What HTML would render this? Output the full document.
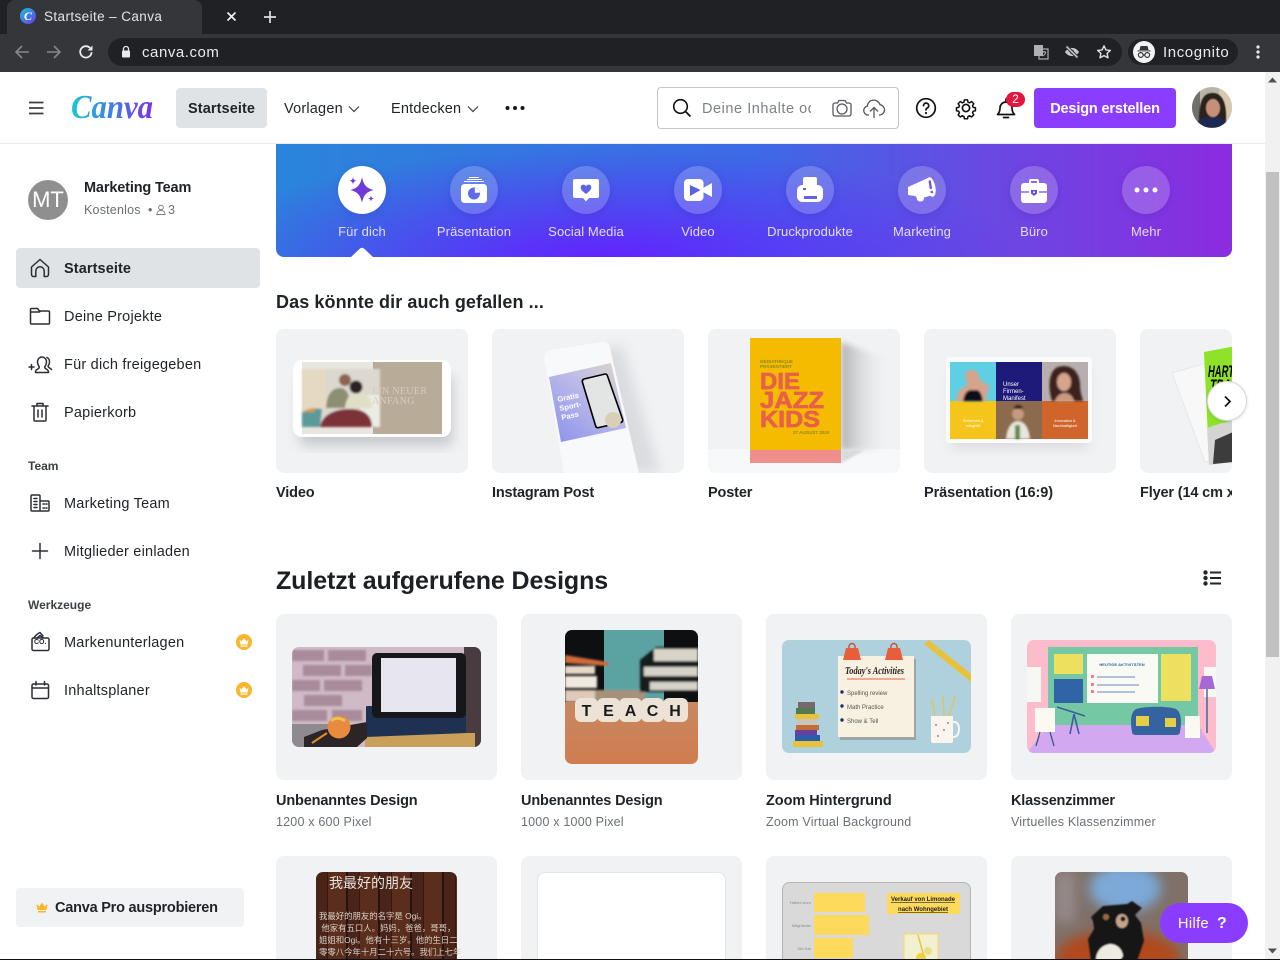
<!DOCTYPE html>
<html lang="de"><head><meta charset="utf-8"><title>Startseite – Canva</title>
<style>
*{box-sizing:border-box}
html,body{margin:0;padding:0;width:1280px;height:960px;overflow:hidden;background:#fff}
body{position:relative;font-family:"Liberation Sans","Noto Sans CJK SC",sans-serif;color:#1f2328;font-size:14.5px}
.a{position:absolute}
.t{position:absolute;white-space:nowrap;line-height:20px;margin-top:1px}
.b{font-weight:700;letter-spacing:-.15px}
.s{color:#6b6f76;font-size:12.5px;letter-spacing:.2px}
.n{letter-spacing:.22px}
.c{background:#f1f2f4;border-radius:8px;position:absolute;overflow:hidden}
svg{position:absolute;display:block;overflow:visible}
.ci{position:absolute;width:48px;height:48px;border-radius:50%;top:166px;background:rgba(255,255,255,.2);box-shadow:0 2px 8px rgba(40,20,120,.12)}
.bl{position:absolute;top:222px;width:112px;text-align:center;font-size:13px;letter-spacing:.1px;line-height:20px;color:#e4dcff;white-space:nowrap}
.ns{fill:none;stroke:#2b2f35;stroke-width:1.5;stroke-linecap:round;stroke-linejoin:round}
.ws{fill:none;stroke:#111;stroke-width:1.7;stroke-linecap:round;stroke-linejoin:round}
</style></head><body>

<!-- browser chrome -->
<div class="a" style="left:0;top:0;width:1280px;height:34px;background:#202124"></div>
<div class="a" style="left:7px;top:0;width:195px;height:34px;background:#35363a;border-radius:8px 8px 0 0"></div>
<div class="a" style="left:0;top:34px;width:1280px;height:38px;background:#35363a"></div>
<div class="a" style="left:20px;top:8px;width:16px;height:16px;border-radius:50%;background:linear-gradient(135deg,#19c3d6,#6a36f0)"></div>
<div class="t" style="left:20px;top:5px;width:16px;text-align:center;color:#fff;font:italic 700 12px/20px 'Liberation Serif',serif">C</div>
<div class="t" style="left:44px;top:6px;color:#e3e4e6;font-size:13.5px;letter-spacing:.4px">Startseite – Canva</div>
<svg style="left:226px;top:11px" width="11" height="11" viewBox="0 0 11 11"><path d="M1.5 1.5l8 8M9.5 1.5l-8 8" stroke="#f1f1f2" stroke-width="1.7"/></svg>
<svg style="left:263px;top:10px" width="14" height="14" viewBox="0 0 14 14"><path d="M7 1v12M1 7h12" stroke="#dfe0e2" stroke-width="1.7"/></svg>
<svg style="left:14px;top:44px" width="16" height="16" viewBox="0 0 16 16"><path d="M15 8H2M8 2L2 8l6 6" fill="none" stroke="#85878b" stroke-width="1.6"/></svg>
<svg style="left:46px;top:44px" width="16" height="16" viewBox="0 0 16 16"><path d="M1 8h13M8 2l6 6-6 6" fill="none" stroke="#85878b" stroke-width="1.6"/></svg>
<svg style="left:78px;top:44px" width="16" height="16" viewBox="0 0 16 16"><path d="M13.6 8.2a5.7 5.7 0 1 1-1.6-4.3" fill="none" stroke="#e8eaed" stroke-width="1.8"/><path d="M14.5 1.5v5h-5z" fill="#e8eaed"/></svg>
<div class="a" style="left:108px;top:38px;width:1014px;height:28px;background:#202124;border-radius:14px"></div>
<svg style="left:121px;top:45px" width="10" height="14" viewBox="0 0 10 14"><path d="M2.5 5.5V4a2.5 2.5 0 0 1 5 0v1.5" fill="none" stroke="#e8eaed" stroke-width="1.3"/><rect x="1" y="5.5" width="8" height="7" rx="1" fill="#e8eaed"/></svg>
<div class="t" style="left:142px;top:42px;color:#e8eaed;font-size:15px;letter-spacing:.55px">canva.com</div>
<svg style="left:1033px;top:44px" width="16" height="16" viewBox="0 0 16 16"><rect x="1" y="1" width="9" height="11" fill="#aeb0b3"/><rect x="6" y="5" width="9" height="10" fill="none" stroke="#aeb0b3" stroke-width="1.2"/><path d="M9 8h4M11 7v1M9.5 12c2-1 3-2.500 3.300-4" stroke="#aeb0b3" fill="none"/></svg>
<svg style="left:1064px;top:44px" width="16" height="16" viewBox="0 0 16 16"><path d="M1 8c3.500-5.500 10.500-5.500 14 0-3.500 5.500-10.500 5.500-14 0z" fill="#c7c8ca"/><circle cx="8" cy="8" r="2.200" fill="#35363a"/><path d="M2.500 2.500l11 11" stroke="#35363a" stroke-width="3.400"/><path d="M2.500 2.500l11 11" stroke="#c7c8ca" stroke-width="1.500"/></svg>
<svg style="left:1096px;top:44px" width="16" height="16" viewBox="0 0 16 16"><path d="M8 1.800l1.900 4.100 4.500.5-3.300 3 .9 4.400L8 11.600l-4 2.200.9-4.400-3.300-3 4.500-.5z" fill="none" stroke="#dfe0e2" stroke-width="1.400" stroke-linejoin="round"/></svg>
<div class="a" style="left:1128px;top:39px;width:110px;height:26px;background:#202124;border-radius:13px"></div>
<div class="a" style="left:1133px;top:41px;width:22px;height:22px;border-radius:50%;background:#f1f3f4"></div>
<svg style="left:1136px;top:44px" width="16" height="16" viewBox="0 0 16 16"><path d="M4.500 2h7l1 4h-9z M1.500 6.400h13v1h-13z" fill="#35363a"/><circle cx="4.800" cy="11" r="2.400" fill="none" stroke="#35363a" stroke-width="1.200"/><circle cx="11.200" cy="11" r="2.400" fill="none" stroke="#35363a" stroke-width="1.200"/><path d="M7 11h2" stroke="#35363a" stroke-width="1.200"/></svg>
<div class="t" style="left:1163px;top:42px;color:#e8eaed;font-size:15px;letter-spacing:.6px">Incognito</div>
<svg style="left:1255px;top:44px" width="6" height="16" viewBox="0 0 6 16"><circle cx="3" cy="3" r="1.600" fill="#e8eaed"/><circle cx="3" cy="8" r="1.600" fill="#e8eaed"/><circle cx="3" cy="13" r="1.600" fill="#e8eaed"/></svg>

<!-- header -->
<div class="a" style="left:0;top:72px;width:1265px;height:72px;background:#fff;border-bottom:1px solid #e8e9eb"></div>
<svg style="left:29px;top:101px" width="15" height="14" viewBox="0 0 15 14"><path d="M0 1.500h14.500M0 7h14.500M0 12.500h14.500" stroke="#3c3f44" stroke-width="1.800"/></svg>
<svg style="left:70px;top:88px" width="86" height="38" viewBox="0 0 86 38"><defs><linearGradient id="lg" x1="0" x2="1" y1="0" y2="0"><stop offset="0" stop-color="#1bc6d4"/><stop offset=".5" stop-color="#3f7fe6"/><stop offset="1" stop-color="#7b2fe8"/></linearGradient></defs><text x="1" y="30" font-family="Liberation Serif" font-style="italic" font-weight="700" font-size="34" fill="url(#lg)" textLength="82" lengthAdjust="spacingAndGlyphs">Canva</text></svg>
<div class="a" style="left:176px;top:88px;width:91px;height:40px;background:#e0e3e6;border-radius:4px"></div>
<div class="t b" style="left:188px;top:98px;letter-spacing:.1px">Startseite</div>
<div class="t" style="left:284px;top:98px;letter-spacing:.2px">Vorlagen</div>
<svg style="left:348px;top:105px" width="12" height="8" viewBox="0 0 12 8"><path d="M1 1.500l5 5 5-5" fill="none" stroke="#3c3f44" stroke-width="1.200"/></svg>
<div class="t" style="left:391px;top:98px;letter-spacing:.2px">Entdecken</div>
<svg style="left:467px;top:105px" width="12" height="8" viewBox="0 0 12 8"><path d="M1 1.500l5 5 5-5" fill="none" stroke="#3c3f44" stroke-width="1.200"/></svg>
<svg style="left:505px;top:105px" width="20" height="6" viewBox="0 0 20 6"><circle cx="2.500" cy="3" r="2" fill="#16181b"/><circle cx="10" cy="3" r="2" fill="#16181b"/><circle cx="17.500" cy="3" r="2" fill="#16181b"/></svg>
<div class="a" style="left:657px;top:87px;width:242px;height:42px;border:1px solid #c3c5c9;border-radius:4px;background:#fff"></div>
<svg style="left:671px;top:97px" width="22" height="22" viewBox="0 0 22 22"><circle cx="9.500" cy="9.500" r="6.800" fill="none" stroke="#111" stroke-width="1.600"/><path d="M14.500 14.500l5 5" stroke="#111" stroke-width="1.800"/></svg>
<div class="a" style="left:702px;top:99px;width:109px;height:20px;overflow:hidden"><div class="t" style="left:0;top:0;margin-top:0;color:#7d8085;letter-spacing:.55px">Deine Inhalte oder Canvas</div></div>
<svg style="left:830px;top:96px" width="24" height="24" viewBox="0 0 24 24"><path d="M3 9a2 2 0 0 1 2-2h2.500l1.500-2.500h6L16.500 7H19a2 2 0 0 1 2 2v9a2 2 0 0 1-2 2H5a2 2 0 0 1-2-2z" fill="none" stroke="#55585d" stroke-width="1.300"/><circle cx="12" cy="13" r="5" fill="none" stroke="#55585d" stroke-width="1.300"/></svg>
<svg style="left:862px;top:96px" width="24" height="24" viewBox="0 0 24 24"><path d="M7 19H6a4.500 4.500 0 0 1-.7-8.900A6.500 6.500 0 0 1 18 8.700a5.200 5.200 0 0 1 0 10.300h-1" fill="none" stroke="#55585d" stroke-width="1.300"/><path d="M12 22v-10M8 15.500l4-4 4 4" fill="none" stroke="#55585d" stroke-width="1.300"/></svg>
<svg style="left:914px;top:96px" width="24" height="24" viewBox="0 0 24 24"><circle cx="12" cy="12" r="9.300" class="ws"/><path d="M9.500 9.700a2.600 2.600 0 1 1 3.800 2.300c-.9.500-1.300 1-1.300 2" class="ws"/><circle cx="12" cy="17" r="1.100" fill="#111"/></svg>
<svg style="left:954px;top:96px" width="24" height="24" viewBox="0 0 24 24"><path d="M10.200 2.800h3.600l.5 2.600 1.900.8 2.200-1.500 2.500 2.500-1.500 2.200.8 1.900 2.600.5v3.400l-2.600.5-.8 1.900 1.500 2.200-2.500 2.500-2.200-1.500-1.900.8-.5 2.600h-3.600l-.5-2.600-1.900-.8-2.200 1.500-2.500-2.500 1.500-2.200-.8-1.900-2.600-.5v-3.400l2.600-.5.8-1.900-1.500-2.200 2.500-2.500 2.200 1.500 1.900-.8z" class="ws" transform="translate(1.400 1.400) scale(.88)"/><circle cx="12" cy="12" r="3.600" class="ws"/></svg>
<svg style="left:994px;top:96px" width="24" height="24" viewBox="0 0 24 24"><path d="M3.500 18.500c1.500-1.500 2.500-3 2.500-6.500a6 6 0 0 1 12 0c0 3.500 1 5 2.500 6.500z" class="ws"/><path d="M9.500 21.500h5M12 3v2" class="ws"/></svg>
<div class="a" style="left:1006px;top:92px;width:19px;height:15px;border-radius:8px;background:#e3163f;color:#fff;font-size:12px;line-height:15px;text-align:center">2</div>
<div class="a" style="left:1034px;top:88px;width:142px;height:40px;background:#8b3dff;border-radius:4px"></div>
<div class="t b" style="left:1034px;top:98px;width:142px;text-align:center;color:#fff">Design erstellen</div>
<svg style="left:1192px;top:87px" width="40" height="41" viewBox="0 0 40 41"><defs><clipPath id="av"><ellipse cx="20" cy="20.500" rx="20" ry="20.500"/></clipPath><filter id="b1"><feGaussianBlur stdDeviation=".6"/></filter></defs><g clip-path="url(#av)"><rect width="40" height="41" fill="#b9b4a6"/><rect x="27" width="13" height="41" fill="#d8c9ae"/><rect x="0" width="8" height="41" fill="#70706c"/><g filter="url(#b1)"><path d="M7 34C7 10 13 6 21 6s14 8 13 28z" fill="#2c211c"/><ellipse cx="21" cy="21" rx="7" ry="9" fill="#c69078"/><path d="M3 41c1-9 9-11 17-11s16 3 17 11z" fill="#1b2a52"/></g></g></svg>

<!-- sidebar -->
<div class="a" style="left:28px;top:180px;width:40px;height:40px;border-radius:50%;background:#8f8f8f;color:#fff;font-size:22px;line-height:40px;text-align:center">MT</div>
<div class="t b" style="left:84px;top:177px">Marketing Team</div>
<div class="t s" style="left:84px;top:199px">Kostenlos&nbsp; •</div>
<svg style="left:156px;top:204px" width="10" height="12" viewBox="0 0 12 14"><circle cx="6" cy="4" r="2.800" fill="none" stroke="#6b6f76"/><path d="M1 12.500c0-3 2-5 5-5s5 2 5 5z" fill="none" stroke="#6b6f76"/></svg>
<div class="t s" style="left:168px;top:199px">3</div>
<div class="a" style="left:16px;top:248px;width:244px;height:40px;background:#e0e3e6;border-radius:4px"></div>
<svg style="left:28px;top:256px" width="24" height="24" viewBox="0 0 24 24"><path d="M3.500 11L12 3.500l8.500 7.500v7.500a2 2 0 0 1-2 2h-2.300v-5.500a4.200 4.200 0 0 0-8.400 0v5.500H5.500a2 2 0 0 1-2-2z" class="ns"/></svg>
<div class="t b" style="left:64px;top:258px;letter-spacing:.1px">Startseite</div>
<svg style="left:28px;top:304px" width="24" height="24" viewBox="0 0 24 24"><path d="M2.500 7V5.500a1 1 0 0 1 1-1h6l2 2.500h9a1 1 0 0 1 1 1v11a1 1 0 0 1-1 1h-17a1 1 0 0 1-1-1z M2.500 8h8.800l1.500-1" class="ns"/></svg>
<div class="t n" style="left:64px;top:306px">Deine Projekte</div>
<svg style="left:28px;top:352px" width="24" height="24" viewBox="0 0 24 24"><path d="M7.500 20.500c-.2-3 2-3 3.300-4.200.8-.8.600-1.500-.1-2.500-1-1.500-1.400-3-1.100-5C10 6.500 12 5 14 5s4 1.500 4.400 3.800c.3 2-.1 3.500-1.100 5-.7 1-.9 1.700-.1 2.500 1.300 1.200 3.500 1.200 3.300 4.200z" class="ns"/><path d="M19 5.500c2 1 2.700 3 2.500 5-.2 1.500-1 3-1.500 3.800.2 1.200 2.200 1.700 3.500 3.200M1 15h5M3.500 12.500v5" class="ns" stroke-width="1.300"/></svg>
<div class="t n" style="left:64px;top:354px">Für dich freigegeben</div>
<svg style="left:28px;top:400px" width="24" height="24" viewBox="0 0 24 24"><path d="M4 6h16M9 6V3.500h6V6M6 6v14a1 1 0 0 0 1 1h10a1 1 0 0 0 1-1V6M10 10v7M14 10v7" class="ns"/></svg>
<div class="t n" style="left:64px;top:402px">Papierkorb</div>
<div class="t b" style="left:28px;top:455px;font-size:12px;color:#3c3f44;letter-spacing:0">Team</div>
<svg style="left:28px;top:491px" width="24" height="24" viewBox="0 0 24 24"><path d="M3 5a1 1 0 0 1 1-1h7a1 1 0 0 1 1 1v15H4a1 1 0 0 1-1-1zM12 10h8a1 1 0 0 1 1 1v8a1 1 0 0 1-1 1h-8M6 7.500h3M6 10.500h3M6 13.500h3M6 16.500h3M15 13h1.500M18 13h1M15 17h1.500M18 17h1" class="ns"/></svg>
<div class="t n" style="left:64px;top:493px">Marketing Team</div>
<svg style="left:28px;top:539px" width="24" height="24" viewBox="0 0 24 24"><path d="M12 4.500v15M4.500 12h15" class="ns"/></svg>
<div class="t n" style="left:64px;top:541px">Mitglieder einladen</div>
<div class="t b" style="left:28px;top:594px;font-size:12px;color:#3c3f44;letter-spacing:0">Werkzeuge</div>
<svg style="left:28px;top:630px" width="24" height="24" viewBox="0 0 24 24"><rect x="4" y="8" width="17" height="12.500" rx="1.500" class="ns"/><path d="M6 8c1-2 3-4 6-5.500l3 3.500M9 8l3-2.500L15 8" class="ns"/></svg>
<div class="t" style="left:34px;top:636px;width:12px;font-size:7px;font-weight:700;line-height:12px;text-align:center">CO.</div>
<div class="t n" style="left:64px;top:632px">Markenunterlagen</div>
<svg style="left:28px;top:678px" width="24" height="24" viewBox="0 0 24 24"><rect x="4" y="6" width="16.500" height="14.500" rx="1.500" class="ns"/><path d="M4 10h16.500M8 3.500V7M16.500 3.500V7" class="ns"/></svg>
<div class="t n" style="left:64px;top:680px">Inhaltsplaner</div>
<svg style="left:236px;top:634px" width="16" height="16" viewBox="0 0 16 16"><circle cx="8" cy="8" r="8" fill="#fbb52c"/><path d="M3.500 5.500l2 2L8 4l2.500 3.500 2-2-.8 5H4.300zM4.500 11.500h7v1.200h-7z" fill="#fff"/></svg>
<svg style="left:236px;top:682px" width="16" height="16" viewBox="0 0 16 16"><circle cx="8" cy="8" r="8" fill="#fbb52c"/><path d="M3.500 5.500l2 2L8 4l2.500 3.500 2-2-.8 5H4.300zM4.500 11.500h7v1.200h-7z" fill="#fff"/></svg>
<div class="a" style="left:16px;top:888px;width:228px;height:39px;background:#f1f2f4;border-radius:4px"></div>
<svg style="left:36px;top:902px" width="12" height="11" viewBox="0 0 12 11"><path d="M.5 2l2.800 2.600L6 .5l2.700 4.100L11.500 2l-1 6h-9zM2 9h8v1.500H2z" fill="#fbb52c"/></svg>
<div class="t b" style="left:55px;top:897px;letter-spacing:-.22px">Canva Pro ausprobieren</div>

<!-- banner -->
<div class="a" style="left:276px;top:144px;width:956px;height:113px;border-radius:0 0 8px 8px;background:radial-gradient(ellipse 420px 115px at 330px 118px,rgba(100,32,255,1),rgba(100,32,255,0)),linear-gradient(90deg,#2a85da,#3d6ae6 50%,#6a48e2 75%,#8a2ce0)"></div>
<div class="ci" style="left:338px;background:#fff"></div>
<div class="ci" style="left:450px"></div><div class="ci" style="left:562px"></div><div class="ci" style="left:674px"></div><div class="ci" style="left:786px"></div><div class="ci" style="left:898px"></div><div class="ci" style="left:1010px"></div><div class="ci" style="left:1122px"></div>
<svg style="left:338px;top:166px" width="48" height="48" viewBox="0 0 48 48" fill="#6f3ad8"><path d="M24 11c1.500 8 4.800 11.500 12 13-7.200 1.500-10.500 5-12 13-1.500-8-4.800-11.500-12-13 7.200-1.500 10.500-5 12-13z"/><path d="M15 11c.4 2.500 1.200 3.300 3.500 3.800-2.300.5-3.100 1.300-3.500 3.800-.4-2.500-1.200-3.300-3.500-3.800 2.300-.5 3.100-1.300 3.500-3.800zM33 29.500c.4 2 1 2.600 3 3-2 .4-2.600 1-3 3-.4-2-1-2.600-3-3 2-.4 2.600-1 3-3z"/></svg>
<svg style="left:450px;top:166px" width="48" height="48" viewBox="0 0 48 48" fill="#fff"><rect x="19" y="11" width="10" height="1"/><rect x="17" y="13" width="15" height="1"/><rect x="14" y="15" width="20" height="1"/><rect x="11" y="18" width="26" height="19" rx="3.500"/><circle cx="24" cy="27.500" r="6" fill="#5f6cea"/><path d="M24.800 26.700v-5a5.500 5.500 0 0 1 5 5z" fill="#fff"/></svg>
<svg style="left:574px;top:178px" width="24" height="24" viewBox="0 0 24 24" fill="#fff"><path d="M1 1h22a2 2 0 0 1 2 2v15a2 2 0 0 1-2 2h-8l-3 3.500L9 20H1a2 2 0 0 1-2-2V3a2 2 0 0 1 2-2z"/><path d="M12 16c-3.700-2.800-5.300-4.500-5.300-6.600 0-3.200 3.800-3.700 5.300-1.200 1.500-2.500 5.300-2 5.300 1.200 0 2.100-1.600 3.800-5.300 6.600z" fill="#5e64e8"/></svg>
<svg style="left:686px;top:178px" width="24" height="24" viewBox="0 0 24 24" fill="#fff"><rect x="-2" y="1" width="19.500" height="22" rx="4"/><path d="M17 10l9-5v14l-9-5z"/><path d="M4 7l10.500 5L4 18z" fill="#5a60e6"/></svg>
<svg style="left:798px;top:178px" width="24" height="24" viewBox="0 0 24 24" fill="#fff"><rect x="5" y="-1" width="14" height="9" rx="2"/><rect x="-1" y="7" width="26" height="17" rx="5.500"/><rect x="6" y="18" width="13" height="3" fill="#6561e6"/><rect x="5" y="10" width="3" height="2" fill="#6561e6"/></svg>
<svg style="left:910px;top:178px" width="24" height="24" viewBox="0 0 24 24" fill="#fff"><path d="M-2 9L18 0l5 17-9 2.500c0 2.500-1 4-3.500 4S6.500 22 6.500 19L5 18l-7-1z"/><ellipse cx="21" cy="9" rx="4.300" ry="10" transform="rotate(-12 21 9)"/><path d="M19.800 3.500l1 6.500" stroke="#6a58e4" stroke-width="2.400" stroke-linecap="round"/><circle cx="21.800" cy="14" r="1.300" fill="#6a58e4"/></svg>
<svg style="left:1022px;top:178px" width="24" height="24" viewBox="0 0 24 24" fill="#fff"><path d="M7 6V3a2 2 0 0 1 2-2h6a2 2 0 0 1 2 2v3h-2V3H9v3z"/><rect x="-1" y="5" width="26" height="20" rx="3"/><path d="M-1 14h8M17 14h8" stroke="#6c4ce4" stroke-width="1.200"/><path d="M9 12h6v3.500L12 18l-3-2.500z" fill="#6c4ce4"/><circle cx="12" cy="14.300" r="1" fill="#fff"/></svg>
<svg style="left:1134px;top:186px" width="24" height="8" viewBox="0 0 24 8" fill="#fff"><circle cx="3" cy="4" r="2.500"/><circle cx="12" cy="4" r="2.500"/><circle cx="21" cy="4" r="2.500"/></svg>
<div class="bl" style="left:306px">Für dich</div><div class="bl" style="left:418px">Präsentation</div><div class="bl" style="left:530px">Social Media</div><div class="bl" style="left:642px">Video</div><div class="bl" style="left:754px">Druckprodukte</div><div class="bl" style="left:866px">Marketing</div><div class="bl" style="left:978px">Büro</div><div class="bl" style="left:1090px">Mehr</div>
<svg style="left:350px;top:247px" width="24" height="10" viewBox="0 0 24 10"><path d="M1 10l9-8.500a3 3 0 0 1 4 0l9 8.500z" fill="#fff"/></svg>

<!-- templates -->
<div class="t b" style="left:276px;top:291px;font-size:18px;letter-spacing:.09px">Das könnte dir auch gefallen ...</div>

<div class="c" style="left:276px;top:329px;width:192px;height:144px">
<svg width="192" height="144" viewBox="276 329 192 144"><defs><filter id="sh"><feGaussianBlur stdDeviation="6"/></filter><filter id="b2"><feGaussianBlur stdDeviation="1"/></filter></defs>
<rect x="299" y="376" width="154" height="70" rx="8" fill="#a6a8ae" opacity=".55" filter="url(#sh)"/><rect x="293" y="360" width="158" height="77" rx="9" fill="#fff"/><rect x="302" y="362" width="140" height="72" fill="#e9e6e0"/><rect x="373" y="362" width="69" height="72" fill="#b8ac98"/>
<g filter="url(#b2)"><rect x="302" y="369" width="78" height="58" fill="#dcd8cf"/><rect x="302" y="369" width="24" height="40" fill="#e5d9c4"/><rect x="360" y="395" width="20" height="32" fill="#ecebe6"/><path d="M326 408c1-14 6-20 14-20 9 0 10 12 11 20z" fill="#8e8e72"/><circle cx="345" cy="380" r="6" fill="#8a6550"/><path d="M345 408c1-12 8-18 16-16 8 2 11 10 11 16z" fill="#e0dfc6"/><circle cx="356" cy="387" r="6.500" fill="#2c2320"/><path d="M320 427c2-12 14-18 30-18s22 8 22 18z" fill="#7d3138"/><path d="M302 427v-14c6-4 12-5 20-4l-2 18z" fill="#5b9a9a"/><path d="M302 412c5-3 9-4 14-4l-2 4z" fill="#d69b46"/></g>
<text x="372" y="394" font-family="Liberation Serif" font-size="10" fill="#d4ccbc" letter-spacing=".3">EIN NEUER</text><text x="372" y="404" font-family="Liberation Serif" font-size="10" fill="#d4ccbc" letter-spacing=".3">ANFANG</text></svg></div>

<div class="c" style="left:492px;top:329px;width:192px;height:144px">
<svg width="192" height="144" viewBox="492 329 192 144"><defs><linearGradient id="ig" x1="0" x2=".8" y1="1" y2="0"><stop offset="0" stop-color="#8a90ea"/><stop offset=".6" stop-color="#b9b8ea"/><stop offset="1" stop-color="#d8d2cc"/></linearGradient></defs>
<path d="M560 360L622 345 660 473H580z" fill="#b9bbc1" opacity=".4" filter="url(#sh)"/><path d="M545 362c-2-6 0-10 6-12l50-8c5-1 8 1 9 6l29 125h-75z" fill="#f8f9fa"/>
<path d="M549 377L611 363 626 428 561 442z" fill="url(#ig)"/><path d="M584 379l21-5c1 0 2 0 2.500 2l15 43c.5 2 0 3-1.500 3.500l-22 5c-2 .5-3 0-3.500-2l-13-43c-.5-2 0-3 1.500-3.500z" fill="#e3e5e5" stroke="#000" stroke-width="1.600"/><circle cx="613" cy="420" r="8" fill="#d9cfb6"/>
<text transform="translate(558 402) rotate(-12)" font-size="7.500" font-weight="700" fill="#fff">Gratis</text><text transform="translate(560 411) rotate(-12)" font-size="7.500" font-weight="700" fill="#fff">Sport-</text><text transform="translate(562 420) rotate(-12)" font-size="7.500" font-weight="700" fill="#fff">Pass</text></svg></div>

<div class="c" style="left:708px;top:329px;width:192px;height:144px">
<svg width="192" height="144" viewBox="708 329 192 144"><defs><linearGradient id="ps" x1="0" x2="1"><stop offset="0" stop-color="#b0b2b6"/><stop offset="1" stop-color="#eff0f2" stop-opacity="0"/></linearGradient><filter id="b3"><feGaussianBlur stdDeviation="3"/></filter></defs>
<rect x="708" y="449" width="192" height="24" fill="#f7f8f9"/><path d="M841 342L890 360V450H841z" fill="url(#ps)" filter="url(#b3)"/><path d="M841 450h24l-24 13z" fill="#d9dadd" filter="url(#b2)"/>
<rect x="750" y="338" width="91" height="112" fill="#f5bb00"/><rect x="750" y="450" width="91" height="13" fill="#ef8f8b"/>
<text x="760" y="363" font-size="4.500" font-weight="700" fill="#8e8a20">MÉDIATHÈQUE</text><text x="760" y="368" font-size="4.500" font-weight="700" fill="#8e8a20">PRÄSENTIERT</text>
<g font-family="Liberation Sans" font-weight="700" font-size="23" fill="#e8604a" stroke="#e8604a" stroke-width=".7"><text x="760" y="389" textLength="40" lengthAdjust="spacingAndGlyphs">DIE</text><text x="760" y="408" textLength="64" lengthAdjust="spacingAndGlyphs">JAZZ</text><text x="760" y="427" textLength="60" lengthAdjust="spacingAndGlyphs">KIDS</text></g>
<text x="793" y="434" font-size="4.500" font-weight="700" fill="#8e8a20">27 AUGUST 2020</text></svg></div>

<div class="c" style="left:924px;top:329px;width:192px;height:144px">
<svg width="192" height="144" viewBox="924 329 192 144">
<rect x="952" y="372" width="136" height="76" fill="#b4b6bc" opacity=".4" filter="url(#sh)"/><rect x="946" y="357" width="146" height="86" rx="4" fill="#fbfbfc"/>
<rect x="950" y="362" width="46" height="39" fill="#5fd0e3"/><rect x="996" y="362" width="46" height="39" fill="#1d1a7a"/><rect x="1042" y="362" width="46" height="39" fill="#b8aeb0"/><rect x="950" y="401" width="46" height="38" fill="#f6c51c"/><rect x="996" y="401" width="46" height="38" fill="#8b6a4d"/><rect x="1042" y="401" width="46" height="38" fill="#cf652b"/>
<g filter="url(#b2)"><path d="M956 401c1-9 5-14 12-16l-3-8c0-8 10-10 13-3l4 8 8 4c-3 5-4 10-3 15z" fill="#d6a48c"/><path d="M963 401c1-6 3-10 7-11h7c4 1 5 6 6 11z" fill="#101014"/><path d="M1052 401c-4-12-4-30 6-34 14-4 22 6 22 18 0 7 2 12 3 16z" fill="#3a241a"/><ellipse cx="1064" cy="382" rx="7" ry="9" fill="#d7a58c"/><path d="M1055 401c2-6 6-8 10-8s8 3 9 8z" fill="#c99880"/><circle cx="1018" cy="414" r="6" fill="#c59b7e"/><path d="M1014 409c0-5 8-5 9 0z" fill="#2a1c14"/><path d="M1006 439c1-12 6-18 12-18s11 6 12 18z" fill="#e9e6e0"/><path d="M1015 439v-14h5v14z" fill="#5d8b47"/></g>
<text x="1003" y="386" font-size="6" fill="#fff">Unser</text><text x="1003" y="393" font-size="6" fill="#fff">Firmen-</text><text x="1003" y="400" font-size="6" fill="#fff">Manifest</text>
<text x="973" y="422" font-size="3.800" text-anchor="middle" fill="#fff">Sicherheit &amp;</text><text x="973" y="427" font-size="3.800" text-anchor="middle" fill="#fff">Integrität</text><text x="1065" y="422" font-size="3.800" text-anchor="middle" fill="#fff">Innovation &amp;</text><text x="1065" y="427" font-size="3.800" text-anchor="middle" fill="#fff">Nachhaltigkeit</text></svg></div>

<div class="c" style="left:1140px;top:329px;width:92px;height:144px">
<svg width="92" height="144" viewBox="1140 329 92 144"><path d="M1172 373l70-20v100l-37 9z" fill="#f8f8f9" stroke="#e6e7e9"/><path d="M1204 352l32-6v112l-27 2z" fill="#8fe22a"/><path d="M1207 428c10-4 20-6 26-8v42l-24 3z" fill="#d4d4d4"/><path d="M1215 440l18-8v30l-20 2z" fill="#3c3c3c"/><text x="1208" y="377" font-size="17" font-weight="700" font-style="italic" fill="#000" textLength="26" lengthAdjust="spacingAndGlyphs">HART</text><text x="1210" y="391" font-size="17" font-weight="700" font-style="italic" fill="#000" textLength="24" lengthAdjust="spacingAndGlyphs">TRAI</text></svg></div>

<div class="t b" style="left:276px;top:482px">Video</div>
<div class="t b" style="left:492px;top:482px;letter-spacing:-.2px">Instagram Post</div>
<div class="t b" style="left:708px;top:482px">Poster</div>
<div class="t b" style="left:924px;top:482px;letter-spacing:-.08px">Präsentation (16:9)</div>
<div class="a" style="left:1140px;top:483px;width:92px;height:20px;overflow:hidden"><div class="t b" style="left:0;top:0;margin-top:0">Flyer (14 cm x 21 cm)</div></div>
<div class="a" style="left:1207px;top:381px;width:40px;height:40px;border-radius:50%;background:#fff;border:1px solid #d5d7da;box-shadow:0 1px 3px rgba(0,0,0,.12)"></div>
<svg style="left:1223px;top:395px" width="9" height="13" viewBox="0 0 9 13"><path d="M2 1.500l5 5-5 5" fill="none" stroke="#111" stroke-width="1.700"/></svg>

<div class="t" style="left:276px;top:565px;font-size:25px;font-weight:700;line-height:30px;letter-spacing:-.1px;color:#1c1f23">Zuletzt aufgerufene Designs</div>
<svg style="left:1203px;top:570px" width="18" height="16" viewBox="0 0 18 16"><circle cx="2.500" cy="2.500" r="2.200" fill="#22262b"/><circle cx="2.500" cy="8" r="2.200" fill="#22262b"/><circle cx="2.500" cy="13.500" r="2.200" fill="#22262b"/><path d="M7 2.500h11M7 8h11M7 13.500h11" stroke="#22262b" stroke-width="1.900"/></svg>

<!-- recent row 1 -->
<div class="c" style="left:276px;top:614px;width:221px;height:166px">
<svg width="221" height="166" viewBox="276 614 221 166"><defs><clipPath id="r1"><rect x="292" y="647" width="189" height="100" rx="7"/></clipPath></defs><g clip-path="url(#r1)"><rect x="292" y="647" width="189" height="100" fill="#cfbac6"/><g filter="url(#b2)" fill="#a98b9c"><rect x="292" y="650" width="32" height="11"/><rect x="328" y="650" width="38" height="11"/><rect x="303" y="665" width="38" height="11"/><rect x="345" y="665" width="27" height="11"/><rect x="292" y="680" width="28" height="11"/><rect x="324" y="680" width="38" height="11"/><rect x="304" y="695" width="38" height="11"/><rect x="292" y="710" width="35" height="11"/><rect x="332" y="710" width="30" height="11"/></g><rect x="464" y="647" width="17" height="100" fill="#4a3b41"/><rect x="292" y="724" width="40" height="23" fill="#8f8a8f"/><rect x="366" y="706" width="100" height="36" rx="1" fill="#1f3152"/><rect x="372" y="653" width="94" height="65" rx="5" fill="#16171a"/><rect x="381" y="658" width="75" height="54" fill="#e7e6ee"/><path d="M365 737l102-4 8 0v14H365z" fill="#c9a05a"/><path d="M304 747v-10l18-7 45-8v16l-10 9z" fill="#2c2528"/><path d="M312 743l15-10" stroke="#e28a2a" stroke-width="2"/><circle cx="339" cy="727" r="11.500" fill="#e88b3f"/><path d="M331 721c4-4 10-3 14 0" stroke="#e8c15a" stroke-width="3" fill="none"/></g></svg></div>

<div class="c" style="left:521px;top:614px;width:221px;height:166px">
<svg width="221" height="166" viewBox="521 614 221 166"><defs><clipPath id="r2"><rect x="565" y="630" width="133" height="134" rx="7"/></clipPath><linearGradient id="wd" x1="0" x2="0" y1="0" y2="1"><stop offset="0" stop-color="#c78860"/><stop offset="1" stop-color="#d07c50"/></linearGradient></defs><g clip-path="url(#r2)"><rect x="565" y="630" width="133" height="72" fill="#0d0f10"/><rect x="604" y="630" width="60" height="72" fill="#5ba3a3"/><g filter="url(#b2)"><path d="M565 655l43 7v4l-43-3z" fill="#cf6a3a"/><rect x="565" y="666" width="30" height="8" fill="#e8d8c8"/><rect x="565" y="676" width="32" height="12" fill="#efe9df"/><rect x="565" y="690" width="30" height="12" fill="#dfc9b8"/><rect x="595" y="690" width="50" height="12" fill="#a8917a"/><path d="M640 660l16-13h42v45h-58z" fill="#141c1c"/><rect x="654" y="649" width="44" height="12" fill="#d8d4c8"/><rect x="644" y="667" width="54" height="9" fill="#d5d2c9"/><rect x="650" y="682" width="48" height="8" fill="#d5d2c9"/></g><rect x="565" y="702" width="133" height="62" fill="url(#wd)"/></g>
<g fill="#ece3d6"><rect x="575" y="698" width="23" height="24" rx="6"/><rect x="597" y="698" width="23" height="24" rx="6"/><rect x="619" y="698" width="23" height="24" rx="6"/><rect x="641" y="698" width="23" height="24" rx="6"/><rect x="663" y="698" width="25" height="24" rx="6"/></g><g font-size="16" font-weight="700" fill="#1a1a1a" text-anchor="middle"><text x="586.500" y="716">T</text><text x="608.500" y="716">E</text><text x="630.500" y="716">A</text><text x="652.500" y="716">C</text><text x="675" y="716">H</text></g></svg></div>

<div class="c" style="left:766px;top:614px;width:221px;height:166px">
<svg width="221" height="166" viewBox="766 614 221 166"><defs><clipPath id="r3"><rect x="782" y="640" width="189" height="113" rx="7"/></clipPath></defs><g clip-path="url(#r3)"><rect x="782" y="640" width="189" height="113" fill="#afd1de"/><rect x="840" y="659" width="76" height="81" fill="#9a9a96" opacity=".8"/><rect x="838" y="656" width="76" height="81" fill="#f8f1e2"/><path d="M924 644L929 640 971 674 971 682z" fill="#e8c23a"/></g>
<g fill="#e85e3a"><path d="M846 648h12l3 12h-18z"/><path d="M888 648h12l3 12h-18z"/></g><path d="M849 648c-1-6 7-6 6 0M891 648c-1-6 7-6 6 0" fill="none" stroke="#c8502f" stroke-width="1.400"/>
<text x="845" y="674" font-family="Liberation Serif" font-style="italic" font-weight="700" font-size="10" fill="#28241e" textLength="59" lengthAdjust="spacingAndGlyphs">Today's Activities</text><path d="M847 679h58" stroke="#e85e3a" stroke-width=".9"/>
<g fill="#1f3163"><circle cx="842" cy="692" r="1.700"/><circle cx="842" cy="706" r="1.700"/><circle cx="842" cy="720" r="1.700"/></g><g font-size="6" fill="#55554f"><text x="847" y="695">Spelling review</text><text x="847" y="709">Math Practice</text><text x="847" y="723">Show &amp; Tell</text></g>
<g><rect x="798" y="702" width="17" height="6" fill="#756b6b"/><rect x="796" y="708" width="19" height="6" fill="#567a4f"/><rect x="795" y="714" width="24" height="5" fill="#e8c23a"/><rect x="797" y="719" width="20" height="6" fill="#c9c5bd"/><rect x="796" y="725" width="23" height="5" fill="#c26f35"/><rect x="795" y="730" width="22" height="5" fill="#6b3fa0"/><rect x="795" y="735" width="25" height="6" fill="#2b5ea8"/><rect x="793" y="741" width="30" height="6" fill="#e8c23a"/></g>
<path d="M931 716h22v25a2 2 0 0 1-2 2h-18a2 2 0 0 1-2-2z" fill="#fbf5ef"/><path d="M953 722c8-2 8 16 0 15" fill="none" stroke="#fbf5ef" stroke-width="2"/><path d="M935 716l-3-17M944 716l-1-20M949 716l6-20" stroke="#e2c54a" stroke-width="1.400"/><g fill="#e26a6a"><circle cx="936" cy="725" r="1"/><circle cx="944" cy="730" r="1"/><circle cx="948" cy="723" r="1"/><circle cx="938" cy="736" r="1"/></g></svg></div>

<div class="c" style="left:1011px;top:614px;width:221px;height:166px">
<svg width="221" height="166" viewBox="1011 614 221 166"><defs><clipPath id="r4"><rect x="1027" y="640" width="189" height="113" rx="7"/></clipPath></defs><g clip-path="url(#r4)"><rect x="1027" y="640" width="189" height="113" fill="#fcbccb"/><rect x="1048" y="647" width="150" height="78" fill="#74c9a4"/><path d="M1027 753l21-28h150l18 28z" fill="#d2a9f0"/><rect x="1027" y="667" width="14" height="35" fill="#f7f7f3"/><rect x="1204" y="667" width="12" height="30" fill="#f7f7f3"/></g>
<rect x="1054" y="654" width="29" height="20" fill="#eee05f"/><rect x="1054" y="679" width="29" height="24" fill="#2f65a6"/><rect x="1087" y="654" width="71" height="49" fill="#fafaf4"/><rect x="1161" y="654" width="30" height="47" fill="#eee05f"/><text x="1122" y="666" font-size="4" font-weight="700" text-anchor="middle" fill="#2f65a6">HEUTIGE AKTIVITÄTEN</text><path d="M1097 677h38M1097 685h42M1097 692h38" stroke="#6b86c2" stroke-width="1"/><g fill="#ef7d9b"><rect x="1091" y="675" width="3" height="3"/><rect x="1091" y="683" width="3" height="3"/><rect x="1091" y="690" width="3" height="3"/></g>
<rect x="1035" y="708" width="20" height="24" fill="#fbfaf2"/><path d="M1040 732l-4 14M1050 732l4 14" stroke="#34558f" stroke-width="1.300"/><path d="M1132 732c-2-12-1-20 4-23 10-3 32-3 40 0 5 3 6 11 4 23 0 3-3 3-6 3h-36c-3 0-6 0-6-3z" fill="#34639f"/><rect x="1136" y="716" width="13" height="10" fill="#e3ce48"/><rect x="1165" y="718" width="11" height="9" fill="#e3ce48"/><path d="M1057 707l28 9M1074 714l-4 20M1074 714l5 20" stroke="#3d5ea0" stroke-width="1.600"/><rect x="1185" y="716" width="15" height="22" fill="#fbfaf2"/><path d="M1202 676h10l3 13h-16z" fill="#a668d2"/><path d="M1207 689v44" stroke="#34558f" stroke-width="1.300"/></svg></div>

<div class="t b" style="left:276px;top:790px">Unbenanntes Design</div><div class="t s" style="left:276px;top:811px">1200 x 600 Pixel</div>
<div class="t b" style="left:521px;top:790px">Unbenanntes Design</div><div class="t s" style="left:521px;top:811px">1000 x 1000 Pixel</div>
<div class="t b" style="left:766px;top:790px;letter-spacing:-.05px">Zoom Hintergrund</div><div class="t s" style="left:766px;top:811px">Zoom Virtual Background</div>
<div class="t b" style="left:1011px;top:790px;letter-spacing:-.2px">Klassenzimmer</div><div class="t s" style="left:1011px;top:811px">Virtuelles Klassenzimmer</div>

<!-- recent row 2 -->
<div class="c" style="left:276px;top:856px;width:221px;height:120px">
<div class="a" style="left:40px;top:16px;width:141px;height:110px;border-radius:7px;overflow:hidden;background:repeating-linear-gradient(90deg,#4a2418 0 11px,#36180f 11px 12px,#5a2d1c 12px 30px,#28120b 30px 32px)"></div>
<div class="t" style="left:53px;top:16px;color:#e8e2da;font-size:14px">我最好的朋友</div>
<div class="t" style="left:43px;top:53px;color:#d8d0c8;font-size:8.400px;line-height:12px">我最好的朋友的名字是 Ogi。<br>&nbsp;他家有五口人。妈妈，爸爸，哥哥，<br>姐姐和Ogi。他有十三岁。他的生日二<br>零零八今年十月二十六号。我们上七年</div></div>
<div class="c" style="left:521px;top:856px;width:221px;height:120px"><div class="a" style="left:16px;top:16px;width:189px;height:110px;background:#fff;border:1px solid #e3e4e6;border-radius:8px"></div></div>
<div class="c" style="left:766px;top:856px;width:221px;height:120px">
<svg width="221" height="120" viewBox="766 856 221 120"><rect x="782.500" y="882.500" width="188" height="100" rx="7" fill="#d9d9d9" stroke="#b5b5b5"/><g fill="#fdd95c"><rect x="814" y="893" width="51" height="19"/><rect x="814" y="915" width="55" height="20"/><rect x="814" y="938" width="39" height="20"/><rect x="887" y="893" width="73" height="21"/></g><text x="923" y="901" font-size="6" font-weight="700" text-anchor="middle" fill="#222" text-decoration="underline">Verkauf von Limonade</text><text x="923" y="911" font-size="6" font-weight="700" text-anchor="middle" fill="#222" text-decoration="underline">nach Wohngebiet</text><g font-size="4" fill="#888" text-anchor="end"><text x="811" y="904">Haben Arzn</text><text x="811" y="927">Mitgründer</text><text x="811" y="950">Gib Kar</text></g><rect x="904" y="934" width="34" height="30" fill="#f1f0d0" stroke="#fdd95c"/><circle cx="921" cy="958" r="5" fill="#f0d23a"/><circle cx="928" cy="951" r="4" fill="#e6e08a"/><path d="M918 935l6 22" stroke="#e8c93a" stroke-width="1.500"/></svg></div>
<div class="c" style="left:1011px;top:856px;width:221px;height:120px">
<svg width="221" height="120" viewBox="1011 856 221 120"><defs><clipPath id="r8"><rect x="1055" y="872" width="133" height="100" rx="7"/></clipPath><filter id="b4"><feGaussianBlur stdDeviation="6"/></filter><filter id="b0"><feGaussianBlur stdDeviation=".8"/></filter></defs><g clip-path="url(#r8)"><rect x="1055" y="872" width="133" height="100" fill="#7f7068"/><g filter="url(#b4)"><ellipse cx="1125" cy="888" rx="36" ry="24" fill="#7ca9d8"/><ellipse cx="1118" cy="958" rx="62" ry="28" fill="#b1491f"/><rect x="1055" y="872" width="20" height="50" fill="#958a8a"/></g><g filter="url(#b0)"><path d="M1091 917l12-11 12-1 12-1 5-3 10 7-7 7 6 8 3 18-7 20h-46l-3-22 6-10-1-8z" fill="#191716"/><ellipse cx="1122" cy="921" rx="6" ry="7" fill="#c4a58a"/><ellipse cx="1123" cy="919" rx="2.500" ry="2.500" fill="#1a1414"/><ellipse cx="1106" cy="917" rx="3" ry="3" fill="#9a6a3e"/><path d="M1096 960c0-9 6-15 14-16 6 0 12 4 13 12l-6 9h-18z" fill="#efeae2"/></g></g></svg></div>

<!-- help -->
<div class="a" style="left:1160px;top:903px;width:88px;height:40px;border-radius:20px;background:#8b3dff"></div>
<div class="t" style="left:1178px;top:913px;color:#fff;letter-spacing:.4px">Hilfe</div><div class="t b" style="left:1217px;top:913px;color:#fff;font-size:16px">?</div>

<!-- scrollbar -->
<div class="a" style="left:1265px;top:72px;width:15px;height:888px;background:#f1f1f1"></div>
<div class="a" style="left:1266px;top:172px;width:13px;height:485px;background:#c1c1c1"></div>
<svg style="left:1267px;top:76px" width="11" height="8" viewBox="0 0 11 8"><path d="M5.500 1.500L10 6.500H1z" fill="#505050"/></svg>
<svg style="left:1267px;top:947px" width="11" height="8" viewBox="0 0 11 8"><path d="M5.500 6.500L10 1.500H1z" fill="#505050"/></svg>
<div class="a" style="left:0;top:959px;width:1280px;height:1px;background:#111"></div>
</body></html>
